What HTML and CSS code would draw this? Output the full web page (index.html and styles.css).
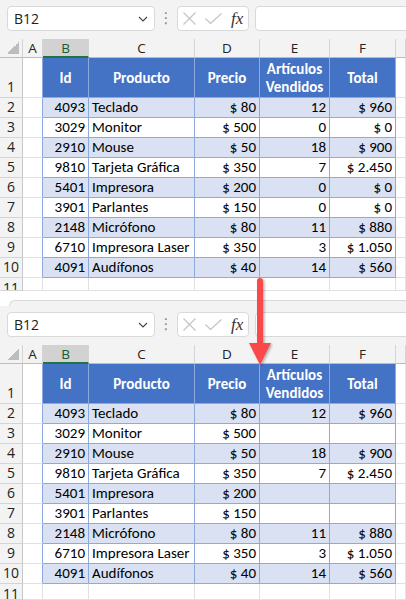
FILE: index.html
```html
<!DOCTYPE html>
<html>
<head>
<meta charset="utf-8">
<link rel="stylesheet" href="styles.css">
</head>
<body>
<div class="shot top">
  <div class="fbar">
    <div class="namebox"><span>B12</span><svg class="chev" width="10" height="6" viewBox="0 0 10 6"><path d="M1 1 L5 5 L9 1" fill="none" stroke="#444" stroke-width="1.1"/></svg></div>
    <div class="dots">⋮</div>
    <div class="fxbox"><svg width="13" height="13" viewBox="0 0 13 13"><path d="M0.5 0.5 L12.5 12.5 M12.5 0.5 L0.5 12.5" stroke="#c4c4c4" stroke-width="1.2" fill="none"/></svg><svg width="17" height="11" viewBox="0 0 17 11"><path d="M0.5 5.5 L5.5 10.5 L16.5 0.5" stroke="#c4c4c4" stroke-width="1.2" fill="none"/></svg><span class="fx">fx</span></div>
    <div class="fin"></div>
  </div>
  <div class="grid">
    <div class="c corner"></div><div class="c ch">A</div><div class="c ch sel">B</div><div class="c ch">C</div><div class="c ch">D</div><div class="c ch">E</div><div class="c ch">F</div><div class="c ch"></div>

    <div class="c rh">1</div><div class="c a"></div><div class="c t th">Id</div><div class="c t th">Producto</div><div class="c t th">Precio</div><div class="c t th">Artículos<br>Vendidos</div><div class="c t th">Total</div><div class="c"></div>

    <div class="c rh">2</div><div class="c a"></div><div class="c t b r">4093</div><div class="c t b">Teclado</div><div class="c t b r">$ 80</div><div class="c t b r">12</div><div class="c t b r">$ 960</div><div class="c"></div>
    <div class="c rh">3</div><div class="c a"></div><div class="c t r">3029</div><div class="c t">Monitor</div><div class="c t r">$ 500</div><div class="c t r">0</div><div class="c t r">$ 0</div><div class="c"></div>
    <div class="c rh">4</div><div class="c a"></div><div class="c t b r">2910</div><div class="c t b">Mouse</div><div class="c t b r">$ 50</div><div class="c t b r">18</div><div class="c t b r">$ 900</div><div class="c"></div>
    <div class="c rh">5</div><div class="c a"></div><div class="c t r">9810</div><div class="c t">Tarjeta Gráfica</div><div class="c t r">$ 350</div><div class="c t r">7</div><div class="c t r">$ 2.450</div><div class="c"></div>
    <div class="c rh">6</div><div class="c a"></div><div class="c t b r">5401</div><div class="c t b">Impresora</div><div class="c t b r">$ 200</div><div class="c t b r">0</div><div class="c t b r">$ 0</div><div class="c"></div>
    <div class="c rh">7</div><div class="c a"></div><div class="c t r">3901</div><div class="c t">Parlantes</div><div class="c t r">$ 150</div><div class="c t r">0</div><div class="c t r">$ 0</div><div class="c"></div>
    <div class="c rh">8</div><div class="c a"></div><div class="c t b r">2148</div><div class="c t b">Micrófono</div><div class="c t b r">$ 80</div><div class="c t b r">11</div><div class="c t b r">$ 880</div><div class="c"></div>
    <div class="c rh">9</div><div class="c a"></div><div class="c t r">6710</div><div class="c t">Impresora Laser</div><div class="c t r">$ 350</div><div class="c t r">3</div><div class="c t r">$ 1.050</div><div class="c"></div>
    <div class="c rh">10</div><div class="c a"></div><div class="c t b r">4091</div><div class="c t b">Audífonos</div><div class="c t b r">$ 40</div><div class="c t b r">14</div><div class="c t b r">$ 560</div><div class="c"></div>

    <div class="c rh last">11</div><div class="c"></div><div class="c"></div><div class="c"></div><div class="c"></div><div class="c"></div><div class="c"></div><div class="c"></div>
  </div>
</div>

<div class="sep"></div>

<div class="shot bottom">
  <div class="edge"><div class="edge-in"></div></div>
  <div class="fbar">
    <div class="namebox"><span>B12</span><svg class="chev" width="10" height="6" viewBox="0 0 10 6"><path d="M1 1 L5 5 L9 1" fill="none" stroke="#444" stroke-width="1.1"/></svg></div>
    <div class="dots">⋮</div>
    <div class="fxbox"><svg width="13" height="13" viewBox="0 0 13 13"><path d="M0.5 0.5 L12.5 12.5 M12.5 0.5 L0.5 12.5" stroke="#c4c4c4" stroke-width="1.2" fill="none"/></svg><svg width="17" height="11" viewBox="0 0 17 11"><path d="M0.5 5.5 L5.5 10.5 L16.5 0.5" stroke="#c4c4c4" stroke-width="1.2" fill="none"/></svg><span class="fx">fx</span></div>
    <div class="fin"></div>
  </div>
  <div class="grid">
    <div class="c corner"></div><div class="c ch">A</div><div class="c ch sel">B</div><div class="c ch">C</div><div class="c ch">D</div><div class="c ch">E</div><div class="c ch">F</div><div class="c ch"></div>

    <div class="c rh">1</div><div class="c a"></div><div class="c t th">Id</div><div class="c t th">Producto</div><div class="c t th">Precio</div><div class="c t th">Artículos<br>Vendidos</div><div class="c t th">Total</div><div class="c"></div>

    <div class="c rh">2</div><div class="c a"></div><div class="c t b r">4093</div><div class="c t b">Teclado</div><div class="c t b r">$ 80</div><div class="c t b r">12</div><div class="c t b r">$ 960</div><div class="c"></div>
    <div class="c rh">3</div><div class="c a"></div><div class="c t r">3029</div><div class="c t">Monitor</div><div class="c t r">$ 500</div><div class="c t r"></div><div class="c t r"></div><div class="c"></div>
    <div class="c rh">4</div><div class="c a"></div><div class="c t b r">2910</div><div class="c t b">Mouse</div><div class="c t b r">$ 50</div><div class="c t b r">18</div><div class="c t b r">$ 900</div><div class="c"></div>
    <div class="c rh">5</div><div class="c a"></div><div class="c t r">9810</div><div class="c t">Tarjeta Gráfica</div><div class="c t r">$ 350</div><div class="c t r">7</div><div class="c t r">$ 2.450</div><div class="c"></div>
    <div class="c rh">6</div><div class="c a"></div><div class="c t b r">5401</div><div class="c t b">Impresora</div><div class="c t b r">$ 200</div><div class="c t b r"></div><div class="c t b r"></div><div class="c"></div>
    <div class="c rh">7</div><div class="c a"></div><div class="c t r">3901</div><div class="c t">Parlantes</div><div class="c t r">$ 150</div><div class="c t r"></div><div class="c t r"></div><div class="c"></div>
    <div class="c rh">8</div><div class="c a"></div><div class="c t b r">2148</div><div class="c t b">Micrófono</div><div class="c t b r">$ 80</div><div class="c t b r">11</div><div class="c t b r">$ 880</div><div class="c"></div>
    <div class="c rh">9</div><div class="c a"></div><div class="c t r">6710</div><div class="c t">Impresora Laser</div><div class="c t r">$ 350</div><div class="c t r">3</div><div class="c t r">$ 1.050</div><div class="c"></div>
    <div class="c rh">10</div><div class="c a"></div><div class="c t b r">4091</div><div class="c t b">Audífonos</div><div class="c t b r">$ 40</div><div class="c t b r">14</div><div class="c t b r">$ 560</div><div class="c"></div>

    <div class="c rh last">11</div><div class="c"></div><div class="c"></div><div class="c"></div><div class="c"></div><div class="c"></div><div class="c"></div><div class="c"></div>
  </div>
</div>

<svg class="arrow" width="24" height="92" viewBox="0 0 24 92">
  <defs><filter id="sh" x="-50%" y="-10%" width="200%" height="130%"><feDropShadow dx="1.5" dy="1" stdDeviation="1" flood-color="#000" flood-opacity="0.3"/></filter></defs>
  <g filter="url(#sh)">
    <path d="M8 5 Q8 2 11 2 Q14 2 14 5 L14 67 L22 67 L11 89 L0 67 L8 67 Z" fill="#f94848"/>
  </g>
</svg>
</body>
</html>
```
FILE: styles.css
```css
html, body {
  margin: 0;
  padding: 0;
}
body {
  width: 406px;
  height: 600px;
  overflow: hidden;
  background: #fff;
  position: relative;
  font-family: "Carlito", "Lato", "Liberation Sans", sans-serif;
}
.shot {
  background: #f3f3f3;
  overflow: hidden;
}
.sep {
  height: 9px;
  background: #fff;
}
.edge {
  height: 6px;
  background: #fff;
  padding-left: 9px;
}
.edge-in {
  height: 6px;
  box-sizing: border-box;
  background: #f3f3f3;
  border-top: 1px solid #d8d8d8;
  border-left: 1px solid #d8d8d8;
  border-top-left-radius: 6px;
}
.fbar {
  height: 39px;
  box-sizing: border-box;
  padding: 6px 0 0 7px;
  display: flex;
  align-items: flex-start;
}
.fbar > * {
  flex-shrink: 0;
}
.namebox {
  width: 148px;
  height: 25px;
  box-sizing: border-box;
  background: #fff;
  border: 1px solid #d9d9d9;
  border-radius: 4px;
  display: flex;
  align-items: center;
  justify-content: space-between;
  padding: 0 6px 0 6px;
  font-family: "Open Sans", sans-serif;
  font-size: 14px;
  color: #222;
}
.dots {
  width: 22px;
  text-align: center;
  color: #8a8a8a;
  font-size: 15px;
  line-height: 25px;
  font-family: "DejaVu Sans", sans-serif;
}
.fxbox {
  width: 72px;
  height: 25px;
  box-sizing: border-box;
  background: #fff;
  border: 1px solid #d9d9d9;
  border-radius: 4px;
  display: flex;
  align-items: center;
  padding: 0 0 0 5px;
}
.fxbox svg:nth-child(2) {
  margin-left: 9px;
}
.fx {
  font-family: "Liberation Serif", serif;
  font-style: italic;
  font-size: 17px;
  color: #333;
  margin-left: 9px;
}
.fin {
  margin-left: 6px;
  width: 170px;
  height: 25px;
  box-sizing: border-box;
  background: #fff;
  border: 1px solid #d9d9d9;
  border-radius: 4px;
}
.grid {
  display: grid;
  grid-template-columns: 23px 20px 46px 106px 65px 70px 66px 10px;
  grid-template-rows: 19px 40px repeat(9, 20px) 13px;
}
.bottom .grid {
  grid-template-rows: 19px 40px repeat(9, 20px) 16px;
}
.c {
  box-sizing: border-box;
  border-right: 1px solid #e1e1e1;
  border-bottom: 1px solid #e1e1e1;
  background: #fff;
  display: flex;
  align-items: flex-end;
  padding: 0 3px 2px;
  font-size: 15px;
  line-height: 16px;
  white-space: nowrap;
  overflow: hidden;
  color: #000;
}
.corner {
  background: #f3f3f3 linear-gradient(135deg, transparent 50%, #bdbdbd 50%) no-repeat right 3px bottom 3px / 12px 12px;
  border-right-color: #d4d4d4;
  border-bottom-color: #bcbcbc;
}
.ch {
  background: #f3f3f3;
  border-right-color: #d4d4d4;
  border-bottom-color: #bcbcbc;
  justify-content: center;
  align-items: center;
  padding: 0;
  font-family: "Open Sans", sans-serif;
  font-size: 13.5px;
  color: #222;
}
.sel {
  background: #d2d2d2;
  border-bottom: 2px solid #217346;
  color: #185c37;
}
.rh {
  background: #f3f3f3;
  border-right-color: #c6c6c6;
  border-bottom-color: #d4d4d4;
  justify-content: center;
  padding: 0 0 1px;
  font-family: "Open Sans", sans-serif;
  font-size: 14px;
  line-height: 18px;
  color: #222;
}
.rh.last {
  align-items: flex-start;
  padding: 1px 0 0;
}
.a {
  border-right-color: #8ea9db;
}
.t {
  border-right-color: #8ea9db;
  border-bottom-color: #8ea9db;
}
.th {
  background: #4472c4;
  color: #fff;
  font-weight: bold;
  justify-content: center;
  align-items: center;
  text-align: center;
  padding: 1px 2px 0;
  line-height: 18px;
}
.b {
  background: #d9e1f2;
}
.r {
  justify-content: flex-end;
}
.arrow {
  position: absolute;
  left: 249px;
  top: 276px;
}
```
